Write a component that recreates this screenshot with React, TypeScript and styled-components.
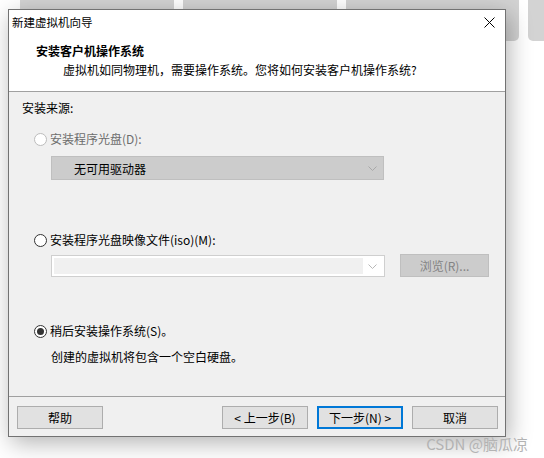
import React from "react";
import styled, { createGlobalStyle, css } from "styled-components";

const GlobalStyle = createGlobalStyle`
  html, body { margin: 0; padding: 0; background: #ffffff; }
  body {
    font-family: "Noto Sans CJK SC", "Noto Sans", sans-serif;
    font-size: 12px;
    color: #000;
  }
`;

const Page = styled.div`
  position: relative;
  width: 544px;
  height: 458px;
  overflow: hidden;
  background: #ffffff;
`;

const Backdrop = styled.div`
  position: absolute;
  top: 0;
  left: 0;
  right: 0;
  display: flex;
  padding-left: 20px;
  gap: 9px;
`;

const BackTab = styled.div<{ $w: number }>`
  width: ${(p) => p.$w}px;
  height: 41px;
  flex: none;
  background: #d3d3d3;
  border-radius: 0 0 5px 5px;
`;

const Dialog = styled.div`
  position: relative;
  margin: 9px 0 0 8px;
  width: 498px;
  height: 428px;
  box-sizing: border-box;
  border: 1px solid #727272;
  display: flex;
  flex-direction: column;
  background: #fff;
  box-shadow: 3px 6px 22px rgba(0, 0, 0, 0.3);
`;

const TitleBar = styled.div`
  height: 24px;
  display: flex;
  align-items: center;
  justify-content: space-between;
  padding: 0 10px 0 3px;
  background: #fff;
`;

const TitleText = styled.span`
  font-size: 11.5px;
  line-height: 24px;
`;

const Header = styled.div`
  padding: 9px 0 13px 27px;
  background: #fff;
  border-bottom: 1px solid #a0a0a0;
`;

const Heading = styled.div`
  font-weight: bold;
  line-height: 16px;
`;

const SubHeading = styled.div`
  margin-top: 3px;
  padding-left: 27px;
  line-height: 16px;
`;

const Body = styled.div`
  flex: 1;
  background: #f0f0f0;
  padding: 8px 0 0 13px;
  display: flex;
  flex-direction: column;
  align-items: flex-start;
`;

const SectionLabel = styled.div`
  line-height: 16px;
`;

const RadioRow = styled.label<{ $top: number; $disabled?: boolean }>`
  margin-top: ${(p) => p.$top}px;
  margin-left: 12px;
  display: flex;
  align-items: center;
  gap: 3px;
  line-height: 16px;
  color: ${(p) => (p.$disabled ? "#6d6d6d" : "#000")};
`;

const RadioCircle = styled.span<{ $checked?: boolean; $disabled?: boolean }>`
  width: 13px;
  height: 13px;
  box-sizing: border-box;
  border-radius: 50%;
  border: 1px solid ${(p) => (p.$disabled ? "#bcbcbc" : "#333333")};
  background: #fff;
  display: flex;
  align-items: center;
  justify-content: center;
  ${(p) =>
    p.$checked &&
    css`
      &::after {
        content: "";
        width: 7px;
        height: 7px;
        border-radius: 50%;
        background: #333333;
      }
    `}
`;

const DisabledSelect = styled.div`
  margin: 9px 0 0 29px;
  width: 333px;
  height: 24px;
  box-sizing: border-box;
  background: #cccccc;
  border: 1px solid #bfbfbf;
  display: flex;
  align-items: center;
  justify-content: space-between;
  padding: 0 6px 0 22px;
`;

const ComboRow = styled.div`
  margin: 7px 0 0 29px;
  display: flex;
  align-items: flex-start;
`;

const Combo = styled.div`
  width: 334px;
  height: 22px;
  box-sizing: border-box;
  border: 1px solid #cfcfcf;
  background: #ffffff;
  display: flex;
  align-items: stretch;
  padding: 2px;
`;

const ComboField = styled.div`
  flex: 1;
  background: #f0f0f0;
`;

const ComboArrow = styled.div`
  width: 19px;
  display: flex;
  align-items: center;
  justify-content: center;
`;

const Button = styled.div<{ $disabled?: boolean; $default?: boolean }>`
  width: 86px;
  height: 23px;
  box-sizing: border-box;
  display: flex;
  align-items: center;
  justify-content: center;
  line-height: 16px;
  background: #e1e1e1;
  border: 1px solid #adadad;
  color: #000;
  ${(p) =>
    p.$disabled &&
    css`
      background: #cccccc;
      border-color: #bfbfbf;
      color: #838383;
    `}
  ${(p) =>
    p.$default &&
    css`
      border: 2px solid #0078d7;
    `}
`;

const BrowseButton = styled(Button)`
  width: 89px;
  margin: -1px 0 0 15px;
`;

const Description = styled.div`
  margin: 10px 0 0 29px;
  line-height: 16px;
`;

const Footer = styled.div`
  border-top: 1px solid #a0a0a0;
  background: #f0f0f0;
  height: 40px;
  box-sizing: border-box;
  padding: 9px 7px 0 8px;
  display: flex;
  align-items: flex-start;
  justify-content: space-between;
`;

const ButtonGroup = styled.div`
  display: flex;
  gap: 9px;
`;

const Watermark = styled.div`
  position: absolute;
  right: 16px;
  bottom: 6px;
  font-size: 15px;
  line-height: 16px;
  color: #b3b3b3;
`;

const Chevron = ({ color }: { color: string }) => (
  <svg width="9" height="5" viewBox="0 0 9 5">
    <path d="M0.5 0.5 L4.5 4.5 L8.5 0.5" fill="none" stroke={color} strokeWidth="1" />
  </svg>
);

const CloseIcon = () => (
  <svg width="11" height="11" viewBox="0 0 11 11">
    <path d="M0.5 0.5 L10.5 10.5 M10.5 0.5 L0.5 10.5" stroke="#000" strokeWidth="1" />
  </svg>
);

export default function App() {
  return (
    <>
      <GlobalStyle />
      <Page>
        <Backdrop>
          <BackTab $w={154} />
          <BackTab $w={154} />
          <BackTab $w={173} />
          <BackTab $w={20} />
        </Backdrop>
        <Dialog>
          <TitleBar>
            <TitleText>新建虚拟机向导</TitleText>
            <CloseIcon />
          </TitleBar>
          <Header>
            <Heading>安装客户机操作系统</Heading>
            <SubHeading>虚拟机如同物理机，需要操作系统。您将如何安装客户机操作系统?</SubHeading>
          </Header>
          <Body>
            <SectionLabel>安装来源:</SectionLabel>
            <RadioRow $top={15} $disabled>
              <RadioCircle $disabled />
              安装程序光盘(D):
            </RadioRow>
            <DisabledSelect>
              <span>无可用驱动器</span>
              <Chevron color="#a8a8a8" />
            </DisabledSelect>
            <RadioRow $top={52}>
              <RadioCircle />
              安装程序光盘映像文件(iso)(M):
            </RadioRow>
            <ComboRow>
              <Combo>
                <ComboField />
                <ComboArrow>
                  <Chevron color="#b8b8b8" />
                </ComboArrow>
              </Combo>
              <BrowseButton $disabled>浏览(R)...</BrowseButton>
            </ComboRow>
            <RadioRow $top={46}>
              <RadioCircle $checked />
              稍后安装操作系统(S)。
            </RadioRow>
            <Description>创建的虚拟机将包含一个空白硬盘。</Description>
          </Body>
          <Footer>
            <Button>帮助</Button>
            <ButtonGroup>
              <Button>&lt; 上一步(B)</Button>
              <Button $default>下一步(N) &gt;</Button>
              <Button>取消</Button>
            </ButtonGroup>
          </Footer>
        </Dialog>
        <Watermark>CSDN @脑瓜凉</Watermark>
      </Page>
    </>
  );
}
